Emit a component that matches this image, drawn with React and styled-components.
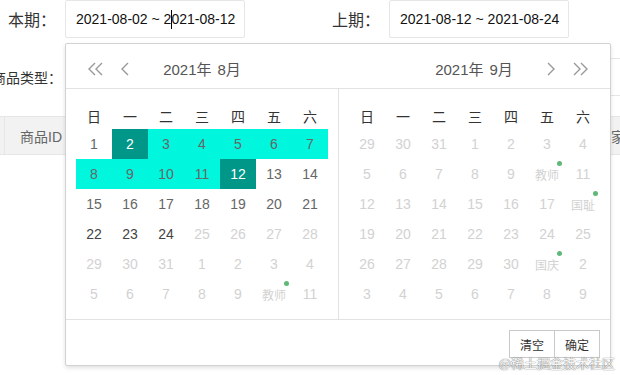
import React from 'react';
import styled, { createGlobalStyle, css } from 'styled-components';

const GlobalStyle = createGlobalStyle`
  html, body {
    margin: 0;
    padding: 0;
    background: #fff;
  }
  body {
    font-family: "Liberation Sans", Arial, "Noto Sans CJK SC", sans-serif;
    font-size: 14px;
    color: #333;
    overflow: hidden;
  }
`;

const Page = styled.div`
  position: relative;
  width: 620px;
  height: 375px;
  overflow: hidden;
`;

const FormRow = styled.div`
  display: flex;
  align-items: center;
  height: 38px;
  margin-bottom: 20px;
`;

const Label = styled.label`
  flex-shrink: 0;
  white-space: nowrap;
  font-size: ${({ $size }) => $size}px;
  color: #333;
  margin-left: ${({ $left }) => $left}px;
  margin-right: ${({ $gap }) => $gap}px;
  font-family: "Noto Sans CJK SC", sans-serif;
`;

const Input = styled.div`
  flex-shrink: 0;
  box-sizing: border-box;
  width: ${({ $w }) => $w}px;
  height: 38px;
  border: 1px solid #e6e6e6;
  border-radius: 2px;
  padding-left: 10px;
  display: flex;
  align-items: center;
  font-size: 14px;
  color: #111;
  background: #fff;
  white-space: nowrap;
`;

const Caret = styled.span`
  display: inline-block;
  width: 1px;
  height: 19px;
  background: #000;
  margin: 0 -0.5px;
  vertical-align: middle;
`;

const TableHead = styled.div`
  display: flex;
  height: 39px;
  box-sizing: border-box;
  background: #f2f2f2;
  border-top: 1px solid #e6e6e6;
  border-bottom: 1px solid #e6e6e6;
`;

const HeadCell = styled.div`
  flex-shrink: 0;
  box-sizing: border-box;
  width: ${({ $w }) => $w}px;
  padding-left: ${({ $pad }) => $pad}px;
  border-left: ${({ $edge }) => ($edge ? '1px solid #e6e6e6' : 'none')};
  display: flex;
  align-items: center;
  color: #666;
  font-size: 14px;
  white-space: nowrap;
`;

/* ---------- laydate popup ---------- */

const Popup = styled.div`
  position: absolute;
  left: 65px;
  top: 43px;
  width: 546px;
  box-sizing: border-box;
  background: #fff;
  border: 1px solid #d2d2d2;
  border-radius: 2px;
  box-shadow: 0 2px 4px rgba(0, 0, 0, 0.12);
`;

const Panels = styled.div`
  display: flex;
`;

const Panel = styled.div`
  width: 272px;
  display: flex;
  flex-direction: column;
`;

const PanelHeader = styled.div`
  height: 45px;
  padding-top: 5px;
  box-sizing: border-box;
  border-bottom: 1px solid #e2e2e2;
  display: flex;
  align-items: center;
`;

const NavGroup = styled.div`
  width: 63px;
  flex-shrink: 0;
  display: flex;
  align-items: center;
  justify-content: ${({ $right }) => ($right ? 'flex-end' : 'flex-start')};
  gap: 18px;
  ${({ $right }) => ($right ? 'padding-right: 21px;' : 'padding-left: 21px;')}
  box-sizing: border-box;
  color: #999;
`;

const Title = styled.div`
  flex: 1;
  display: flex;
  justify-content: center;
  gap: 6px;
  font-size: 15px;
  color: #555;
`;

const Content = styled.div`
  padding: 10px;
  border-left: ${({ $divider }) => ($divider ? '1px solid #e2e2e2' : 'none')};
`;

const Grid = styled.div`
  display: grid;
  grid-template-columns: repeat(7, 36px);
  grid-auto-rows: 30px;
`;

const WeekDay = styled.div`
  display: flex;
  align-items: center;
  justify-content: center;
  padding-top: 3px;
  color: #333;
  font-size: 14px;
  font-family: "Noto Sans CJK SC", sans-serif;
`;

const toneColor = {
  normal: '#666',
  dark: '#444',
  muted: '#d2d2d2',
};

const Day = styled.div`
  position: relative;
  display: flex;
  align-items: center;
  justify-content: center;
  font-size: 14px;
  color: ${({ $tone }) => toneColor[$tone]};
  ${({ $range }) =>
    $range &&
    css`
      background: #00f7de;
      color: #666;
    `}
  ${({ $active }) =>
    $active &&
    css`
      background: #009688;
      color: #fff;
    `}
`;

const Mark = styled.span`
  font-size: 12px;
  font-family: "Noto Sans CJK SC", sans-serif;
  &::after {
    content: '';
    position: absolute;
    right: 3px;
    top: 2px;
    width: 5px;
    height: 5px;
    border-radius: 50%;
    background: #5fb878;
  }
`;

const Footer = styled.div`
  height: 46px;
  box-sizing: border-box;
  border-top: 1px solid #e2e2e2;
  padding: 10px 10px 0;
  display: flex;
  justify-content: flex-end;
  align-items: flex-start;
`;

const FooterBtn = styled.span`
  height: 28px;
  box-sizing: border-box;
  padding: 0 10px;
  margin-left: -1px;
  border: 1px solid #c9c9c9;
  background: #fff;
  font-size: 12px;
  color: #333;
  display: flex;
  align-items: center;
  font-family: "Noto Sans CJK SC", sans-serif;
`;

const Watermark = styled.div`
  position: absolute;
  right: 5px;
  bottom: 5px;
  font-size: 13px;
  line-height: 14px;
  color: rgba(255, 255, 255, 0.95);
  text-shadow: 0 0 1px rgba(0, 0, 0, 0.55), 0 0 1px rgba(0, 0, 0, 0.35);
  font-family: "Noto Sans CJK SC", sans-serif;
  white-space: nowrap;
`;

const DoubleChevron = ({ dir }) => (
  <svg width="16" height="14" viewBox="0 0 16 14" fill="none" stroke="currentColor" strokeWidth="1.4">
    {dir === 'left' ? (
      <>
        <polyline points="8,1 2,7 8,13" />
        <polyline points="15,1 9,7 15,13" />
      </>
    ) : (
      <>
        <polyline points="1,1 7,7 1,13" />
        <polyline points="8,1 14,7 8,13" />
      </>
    )}
  </svg>
);

const Chevron = ({ dir }) => (
  <svg width="8" height="14" viewBox="0 0 8 14" fill="none" stroke="currentColor" strokeWidth="1.4">
    {dir === 'left' ? <polyline points="7,1 1,7 7,13" /> : <polyline points="1,1 7,7 1,13" />}
  </svg>
);

const weekDays = ['日', '一', '二', '三', '四', '五', '六'];

// each cell: [label, tone, flags]
const augustDays = (() => {
  const cells = [];
  for (let d = 1; d <= 31; d++) {
    const tone = d > 24 ? 'muted' : d >= 22 ? 'dark' : 'normal';
    cells.push({
      label: d,
      tone,
      range: d >= 2 && d <= 12,
      active: d === 2 || d === 12,
    });
  }
  [1, 2, 3, 4, 5, 6, 7, 8, 9, '教师', 11].forEach((d) =>
    cells.push({ label: d, tone: 'muted', mark: typeof d === 'string' })
  );
  return cells;
})();

const septemberDays = (() => {
  const cells = [29, 30, 31].map((d) => ({ label: d, tone: 'muted' }));
  const marks = { 10: '教师', 18: '国耻' };
  for (let d = 1; d <= 30; d++) {
    cells.push({ label: marks[d] || d, tone: 'muted', mark: !!marks[d] });
  }
  ['国庆', 2, 3, 4, 5, 6, 7, 8, 9].forEach((d) =>
    cells.push({ label: d, tone: 'muted', mark: typeof d === 'string' })
  );
  return cells;
})();

const MonthGrid = ({ days }) => (
  <Grid>
    {weekDays.map((w) => (
      <WeekDay key={w}>{w}</WeekDay>
    ))}
    {days.map((c, i) => (
      <Day key={i} $tone={c.tone} $range={c.range} $active={c.active}>
        {c.mark ? <Mark>{c.label}</Mark> : c.label}
      </Day>
    ))}
  </Grid>
);

export default function App() {
  return (
    <Page>
      <GlobalStyle />
      <FormRow>
        <Label $size={16} $left={8} $gap={9}>本期：</Label>
        <Input $w={180}>
          2021-08-02 ~ 2<Caret />021-08-12
        </Input>
        <Label $size={16} $left={87} $gap={9}>上期：</Label>
        <Input $w={180}>2021-08-12 ~ 2021-08-24</Input>
      </FormRow>
      <FormRow>
        <Label $size={14} $left={-8} $gap={3}>商品类型：</Label>
        <Input $w={600} />
      </FormRow>
      <TableHead>
        <HeadCell $w={4} />
        <HeadCell $w={577} $pad={15} $edge>商品ID</HeadCell>
        <HeadCell $w={120} $pad={15} $edge>商家名称</HeadCell>
      </TableHead>

      <Popup>
        <Panels>
          <Panel>
            <PanelHeader>
              <NavGroup>
                <DoubleChevron dir="left" />
                <Chevron dir="left" />
              </NavGroup>
              <Title>
                <span>2021年</span>
                <span>8月</span>
              </Title>
              <NavGroup $right />
            </PanelHeader>
            <Content>
              <MonthGrid days={augustDays} />
            </Content>
          </Panel>
          <Panel>
            <PanelHeader>
              <NavGroup />
              <Title>
                <span>2021年</span>
                <span>9月</span>
              </Title>
              <NavGroup $right>
                <Chevron dir="right" />
                <DoubleChevron dir="right" />
              </NavGroup>
            </PanelHeader>
            <Content $divider>
              <MonthGrid days={septemberDays} />
            </Content>
          </Panel>
        </Panels>
        <Footer>
          <FooterBtn>清空</FooterBtn>
          <FooterBtn>确定</FooterBtn>
        </Footer>
      </Popup>
      <Watermark>@稀土掘金技术社区</Watermark>
    </Page>
  );
}
